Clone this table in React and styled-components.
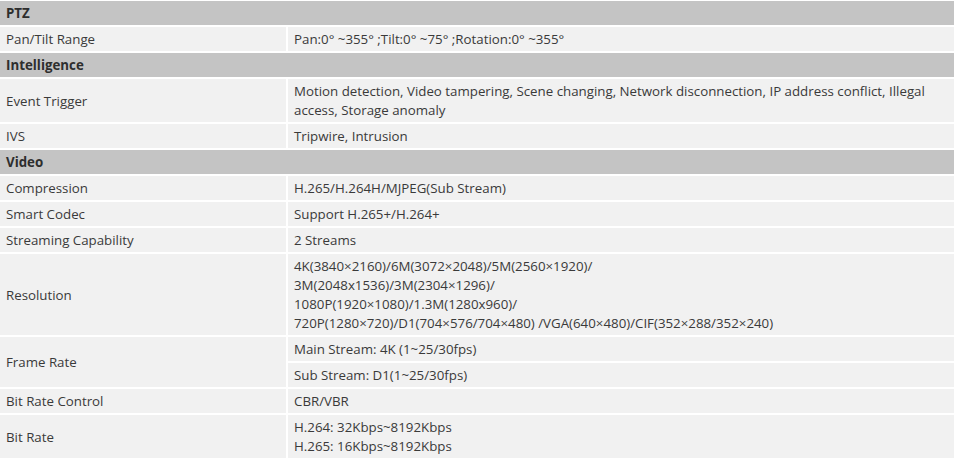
import styled, { createGlobalStyle } from "styled-components";

const GlobalStyle = createGlobalStyle`
  body {
    margin: 0;
    background: #fff;
    font-family: "Open Sans", "Noto Sans", sans-serif;
  }
`;

const specs = [
  { section: "PTZ" },
  { label: "Pan/Tilt Range", value: ["Pan:0° ~355° ;Tilt:0° ~75° ;Rotation:0° ~355°"] },
  { section: "Intelligence" },
  {
    label: "Event Trigger",
    value: [
      "Motion detection, Video tampering, Scene changing, Network disconnection, IP address conflict, Illegal access, Storage anomaly",
    ],
  },
  { label: "IVS", value: ["Tripwire, Intrusion"] },
  { section: "Video" },
  { label: "Compression", value: ["H.265/H.264H/MJPEG(Sub Stream)"] },
  { label: "Smart Codec", value: ["Support H.265+/H.264+"] },
  { label: "Streaming Capability", value: ["2 Streams"] },
  {
    label: "Resolution",
    value: [
      "4K(3840×2160)/6M(3072×2048)/5M(2560×1920)/",
      "3M(2048x1536)/3M(2304×1296)/",
      "1080P(1920×1080)/1.3M(1280x960)/",
      "720P(1280×720)/D1(704×576/704×480) /VGA(640×480)/CIF(352×288/352×240)",
    ],
  },
  {
    label: "Frame Rate",
    split: ["Main Stream: 4K (1~25/30fps)", "Sub Stream: D1(1~25/30fps)"],
  },
  { label: "Bit Rate Control", value: ["CBR/VBR"] },
  {
    label: "Bit Rate",
    value: ["H.264: 32Kbps~8192Kbps", "H.265: 16Kbps~8192Kbps"],
  },
];

function App() {
  return (
    <>
      <GlobalStyle />
      <Table>
        <colgroup>
          <col style={{ width: 287 }} />
          <col />
        </colgroup>
        <tbody>
          {specs.map((row) => {
            if (row.section) {
              return (
                <tr key={row.section}>
                  <SectionCell colSpan={2}>{row.section}</SectionCell>
                </tr>
              );
            }
            if (row.split) {
              return [
                <tr key={row.label}>
                  <Cell rowSpan={2}>{row.label}</Cell>
                  <Cell>{row.split[0]}</Cell>
                </tr>,
                <tr key={row.label + "-2"}>
                  <Cell>{row.split[1]}</Cell>
                </tr>,
              ];
            }
            return (
              <tr key={row.label}>
                <Cell>{row.label}</Cell>
                <Cell>
                  {row.value.map((line, i) => (
                    <Line key={i}>{line}</Line>
                  ))}
                </Cell>
              </tr>
            );
          })}
        </tbody>
      </Table>
    </>
  );
}

const Table = styled.table`
  width: 956px;
  margin-top: -1px;
  border-collapse: collapse;
  table-layout: fixed;
  font-size: 13.3px;
  line-height: 19px;
  color: #3a3a3a;
`;

const Cell = styled.td`
  background: #f1f1f1;
  border: 2px solid #fff;
  border-left: none;
  padding: 3px 6px 2px;
  vertical-align: middle;
  text-align: left;

  & + & {
    border-left: 2px solid #fff;
  }
`;

const SectionCell = styled(Cell)`
  background: #c4c4c4;
  font-weight: bold;
  color: #2e2e2e;
`;

const Line = styled.div``;

export default App;
